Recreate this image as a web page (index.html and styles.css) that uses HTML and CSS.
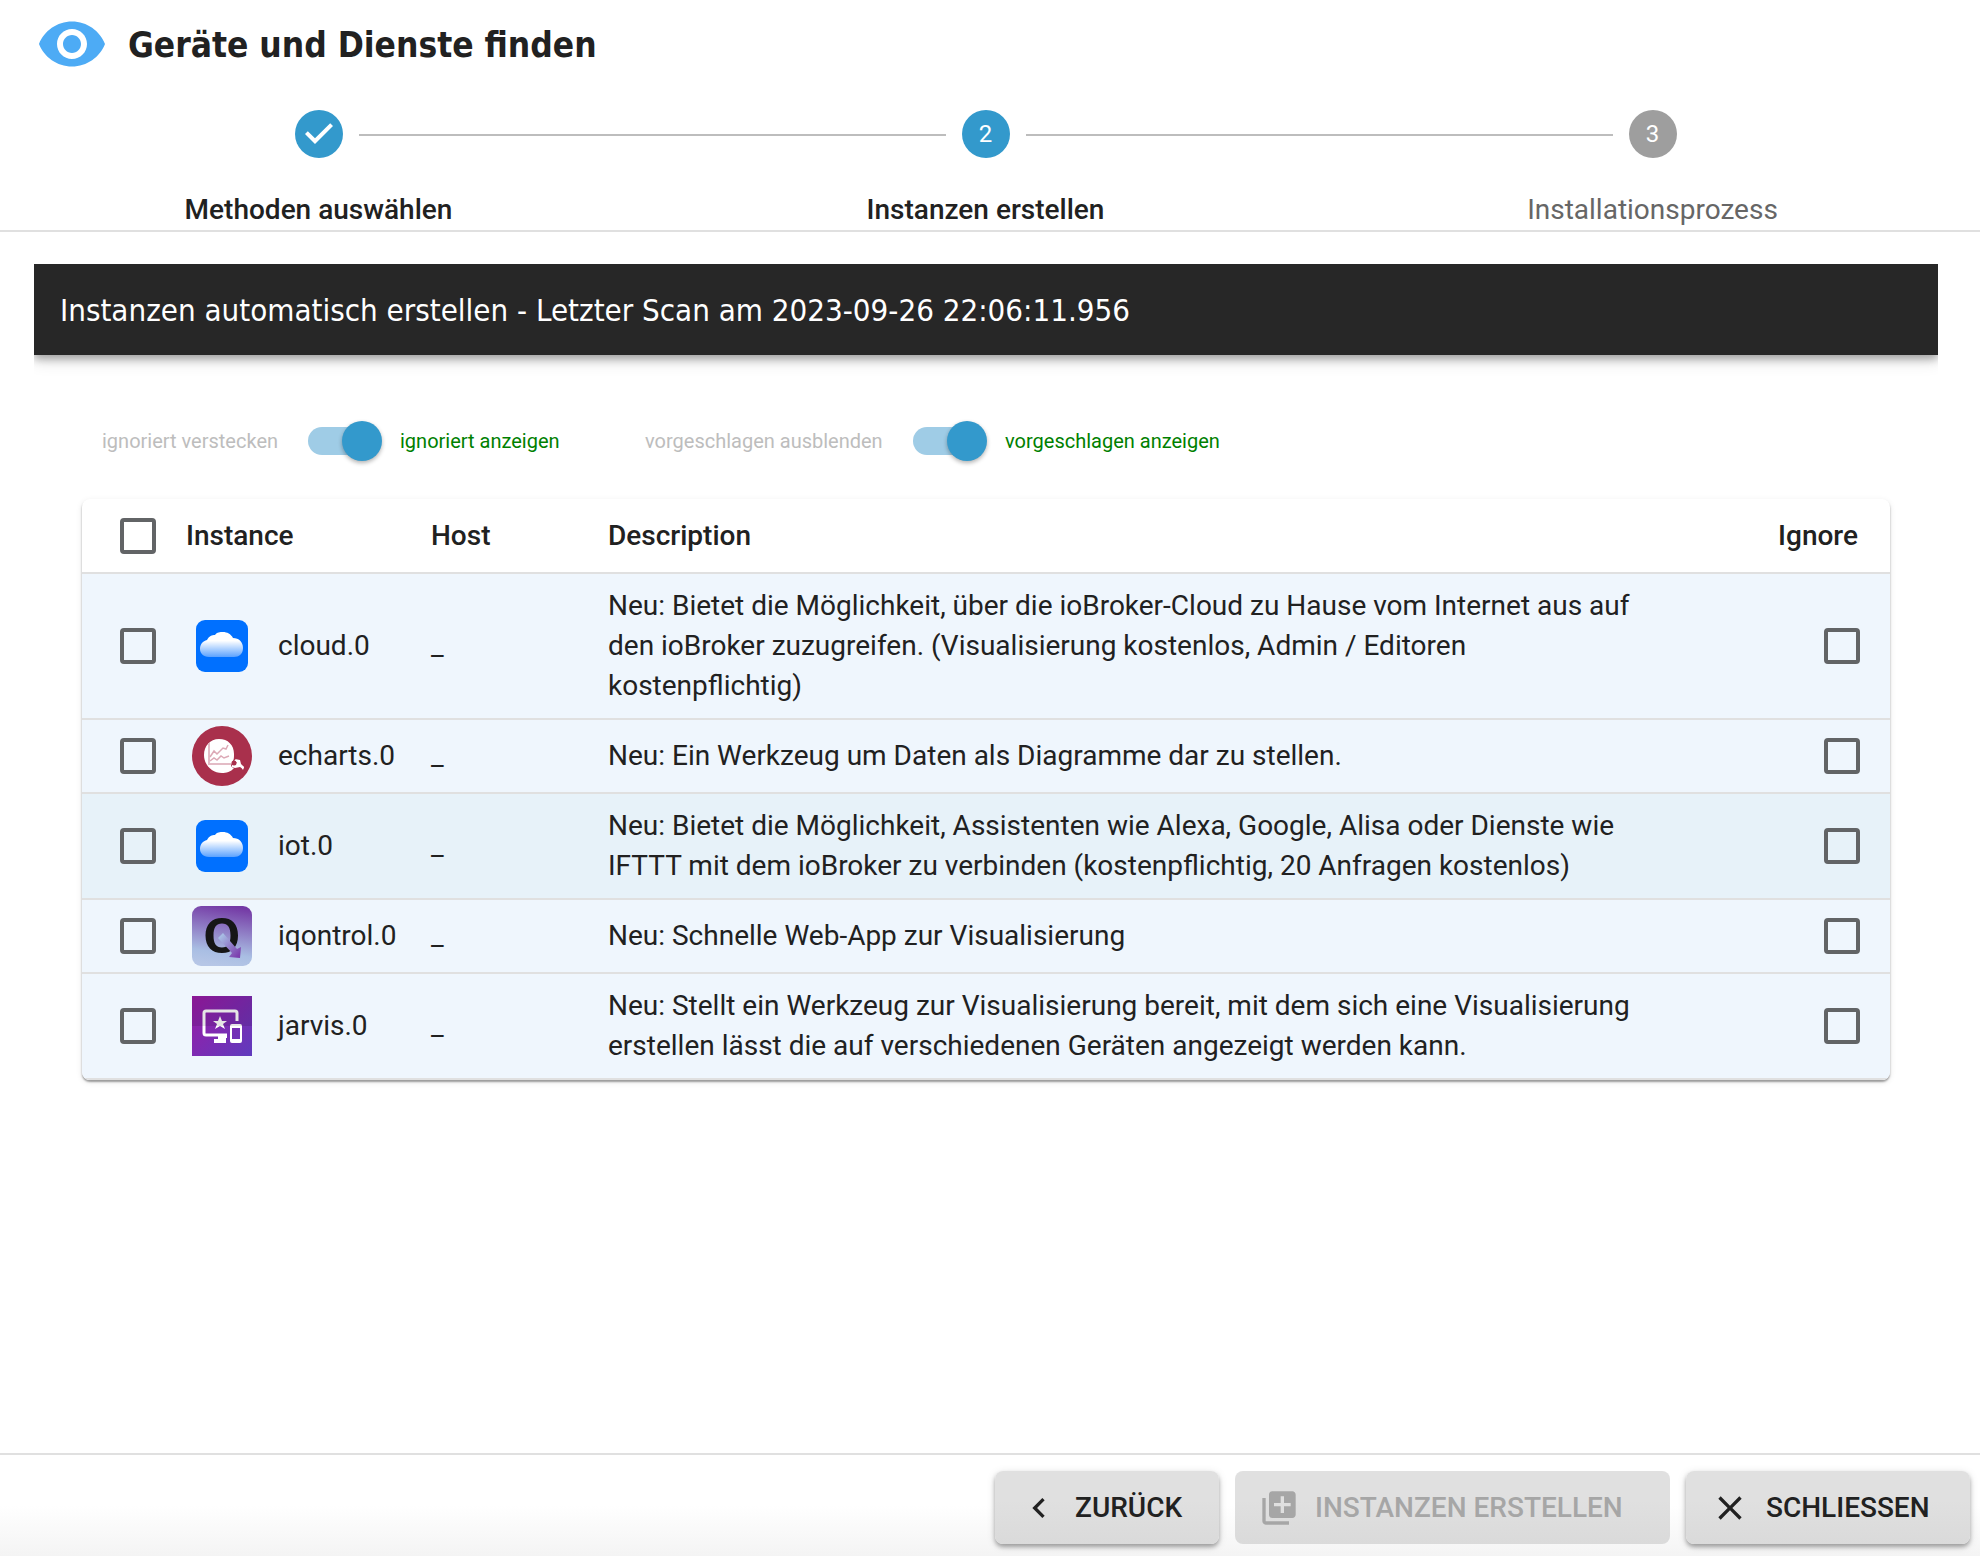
FILE: index.html
```html
<!DOCTYPE html>
<html lang="de">
<head>
<meta charset="utf-8">
<meta name="viewport" content="width=device-width, initial-scale=1">
<title>Geräte und Dienste finden</title>
<link rel="stylesheet" href="styles.css">
</head>
<body>
<div class="dialog">
  <header class="header">
    <div class="title-row">
      <svg class="title-icon" viewBox="0 0 24 24" aria-hidden="true"><path d="M12 4.500C7 4.500 2.730 7.610 1 12c1.730 4.390 6 7.500 11 7.500s9.270-3.110 11-7.500c-1.730-4.390-6-7.500-11-7.500zM12 17c-2.760 0-5-2.240-5-5s2.240-5 5-5 5 2.240 5 5-2.240 5-5 5zm0-8c-1.660 0-3 1.340-3 3s1.340 3 3 3 3-1.340 3-3-1.340-3-3-3z"/></svg>
      <h1 class="title">Geräte und Dienste finden</h1>
    </div>
    <ol class="stepper">
      <li class="step step-done">
        <span class="step-mark">
          <svg class="step-check" viewBox="0 0 24 24" aria-hidden="true"><path d="M10 17l-5-5 1.410-1.410L10 14.170l7.590-7.590L19 8z"/></svg>
        </span>
        <span class="step-label">Methoden auswählen</span>
      </li>
      <li class="step step-active">
        <span class="step-mark">2</span>
        <span class="step-label">Instanzen erstellen</span>
      </li>
      <li class="step">
        <span class="step-mark">3</span>
        <span class="step-label">Installationsprozess</span>
      </li>
    </ol>
  </header>

  <main class="content">
    <h2 class="bar">Instanzen automatisch erstellen - Letzter Scan am 2023-09-26 22:06:11.956</h2>

    <div class="filters">
      <span class="filter-off">ignoriert verstecken</span>
      <input class="switch" type="checkbox" role="switch" id="show-ignored" checked>
      <label class="filter-on" for="show-ignored">ignoriert anzeigen</label>
      <span class="filter-off">vorgeschlagen ausblenden</span>
      <input class="switch" type="checkbox" role="switch" id="show-suggested" checked>
      <label class="filter-on" for="show-suggested">vorgeschlagen anzeigen</label>
    </div>

    <div class="paper">
      <table class="table">
        <colgroup>
          <col class="col-check"><col class="col-instance"><col class="col-host"><col class="col-description"><col class="col-ignore">
        </colgroup>
        <thead>
          <tr>
            <th class="cell-check"><input class="box" type="checkbox" aria-label="Alle auswählen"></th>
            <th scope="col">Instance</th>
            <th scope="col">Host</th>
            <th scope="col">Description</th>
            <th scope="col" class="cell-ignore">Ignore</th>
          </tr>
        </thead>
        <tbody>
          <tr>
            <td class="cell-check"><input class="box" type="checkbox" aria-label="cloud.0 auswählen"></td>
            <td><div class="instance">
              <svg class="logo" viewBox="0 0 60 60" aria-hidden="true">
                <defs><linearGradient id="cloud-a" x1="0" y1="0" x2="0" y2="1"><stop offset=".35" stop-color="#fff"/><stop offset="1" stop-color="#5ba2ff"/></linearGradient></defs>
                <rect x="4" y="4" width="52" height="52" rx="9" fill="#0070ff"/>
                <path d="M17 41C11 41 8 37 8 33c0-5 3-8 7-9 2-4 5-5 8-5 2-3 5-3 8-3 4 0 8 2 10 6 6 0 10 4 10 10 0 6-4 9-9 9z" fill="url(#cloud-a)"/>
              </svg>cloud.0</div></td>
            <td>_</td>
            <td>Neu: Bietet die Möglichkeit, über die ioBroker-Cloud zu Hause vom Internet aus auf den ioBroker zuzugreifen. (Visualisierung kostenlos, Admin / Editoren kostenpflichtig)</td>
            <td class="cell-ignore"><input class="box" type="checkbox" aria-label="cloud.0 ignorieren"></td>
          </tr>
          <tr>
            <td class="cell-check"><input class="box" type="checkbox" aria-label="echarts.0 auswählen"></td>
            <td><div class="instance">
              <svg class="logo" viewBox="0 0 60 60" aria-hidden="true">
                <circle cx="30" cy="30" r="30" fill="#a9304c"/>
                <path d="M27 13c9 0 15 6 15 15 0 3 0 5-1 7l-2 4c0 2 2 3 3 3-3 4-8 5-12 5-10 0-18-8-18-18 0-9 6-16 15-16z" fill="#fff"/>
                <path d="M17 17v21h22" fill="none" stroke="#e3bcc6" stroke-width="2"/>
                <path d="M18 31l4-6 3 3 6-6 3 1 2-4M18 35l4-3 3 2 4-4 3 2 5-2" fill="none" stroke="#dca9b6" stroke-width="1.500"/>
                <path d="M40 38l5-1-3-3 5 0 1 4 4 3-1 2-3-2-5 1-3-1z" fill="#fff"/>
                <circle cx="42" cy="37" r="2.500" fill="#a9304c"/>
                <path d="M43 33l5 1 1 4 3 3-1 3-2-3-4 0 1-3z" fill="#fff"/>
              </svg>echarts.0</div></td>
            <td>_</td>
            <td>Neu: Ein Werkzeug um Daten als Diagramme dar zu stellen.</td>
            <td class="cell-ignore"><input class="box" type="checkbox" aria-label="echarts.0 ignorieren"></td>
          </tr>
          <tr class="row-hover">
            <td class="cell-check"><input class="box" type="checkbox" aria-label="iot.0 auswählen"></td>
            <td><div class="instance">
              <svg class="logo" viewBox="0 0 60 60" aria-hidden="true">
                <rect x="4" y="4" width="52" height="52" rx="9" fill="#0070ff"/>
                <path d="M17 41C11 41 8 37 8 33c0-5 3-8 7-9 2-4 5-5 8-5 2-3 5-3 8-3 4 0 8 2 10 6 6 0 10 4 10 10 0 6-4 9-9 9z" fill="url(#cloud-a)"/>
              </svg>iot.0</div></td>
            <td>_</td>
            <td>Neu: Bietet die Möglichkeit, Assistenten wie Alexa, Google, Alisa oder Dienste wie IFTTT mit dem ioBroker zu verbinden (kostenpflichtig, 20 Anfragen kostenlos)</td>
            <td class="cell-ignore"><input class="box" type="checkbox" aria-label="iot.0 ignorieren"></td>
          </tr>
          <tr>
            <td class="cell-check"><input class="box" type="checkbox" aria-label="iqontrol.0 auswählen"></td>
            <td><div class="instance">
              <svg class="logo" viewBox="0 0 60 60" aria-hidden="true">
                <defs>
                  <linearGradient id="iq-back" x1=".6" y1="0" x2=".45" y2="1"><stop offset="0" stop-color="#7439a5"/><stop offset=".78" stop-color="#a9bee3"/><stop offset="1" stop-color="#b6c6e6"/></linearGradient>
                  <linearGradient id="iq-arrow" x1="0" y1="0" x2="1" y2="1"><stop offset=".1" stop-color="#a9c2e6"/><stop offset=".9" stop-color="#7c3fae"/></linearGradient>
                </defs>
                <rect width="60" height="60" rx="9" fill="url(#iq-back)"/>
                <path d="M30 12c10 0 16 6 16 17.500S40 47 30 47s-16.500-6-16.500-17.500S20 12 30 12zm0 5.500c-6 0-8.500 4-8.500 12s2.500 12 8.500 12 8.500-4 8.500-12-2.500-12-8.500-12z" fill="#161616" fill-rule="evenodd"/>
                <path d="M31 27l14 16 4-2-1 11-11-1 3-4-14-15z" fill="url(#iq-arrow)"/>
              </svg>iqontrol.0</div></td>
            <td>_</td>
            <td>Neu: Schnelle Web-App zur Visualisierung</td>
            <td class="cell-ignore"><input class="box" type="checkbox" aria-label="iqontrol.0 ignorieren"></td>
          </tr>
          <tr>
            <td class="cell-check"><input class="box" type="checkbox" aria-label="jarvis.0 auswählen"></td>
            <td><div class="instance">
              <svg class="logo" viewBox="0 0 60 60" aria-hidden="true">
                <defs><linearGradient id="jarvis-back" x1="0" y1="0" x2="1" y2="1"><stop offset="0" stop-color="#9c1aa6"/><stop offset="1" stop-color="#5f3bbd"/></linearGradient></defs>
                <rect width="60" height="60" fill="url(#jarvis-back)"/>
                <path d="M45 25v-8q0-2-2-2H14q-2 0-2 2v20q0 2 2 2h21" fill="none" stroke="#fff" stroke-width="3"/>
                <path d="M26 38h9v4h-1v5H22v-4h4z" fill="#fff"/>
                <path d="M28 20l2 5h5l-4 3 2 5-5-3-5 3 2-5-4-3h5z" fill="#fff"/>
                <path d="M40 28h8q2 0 2 2v15q0 2-2 2h-8q-2 0-2-2V30q0-2 2-2zm0 4v11h8V32z" fill="#fff" fill-rule="evenodd"/>
                <rect width="60" height="30" fill="#000" opacity=".1"/>
              </svg>jarvis.0</div></td>
            <td>_</td>
            <td>Neu: Stellt ein Werkzeug zur Visualisierung bereit, mit dem sich eine Visualisierung erstellen lässt die auf verschiedenen Geräten angezeigt werden kann.</td>
            <td class="cell-ignore"><input class="box" type="checkbox" aria-label="jarvis.0 ignorieren"></td>
          </tr>
        </tbody>
      </table>
    </div>
  </main>

  <footer class="footer">
    <button class="button button-back" type="button">
      <svg class="button-icon" viewBox="0 0 24 24" aria-hidden="true"><path d="M15.410 7.410L14 6l-6 6 6 6 1.410-1.410L10.830 12z"/></svg>
      ZURÜCK
    </button>
    <button class="button button-create" type="button" disabled>
      <svg class="button-icon" viewBox="0 0 24 24" aria-hidden="true"><path d="M4 6H2v14c0 1.100.9 2 2 2h14v-2H4V6zm16-4H8c-1.100 0-2 .9-2 2v12c0 1.100.9 2 2 2h12c1.100 0 2-.9 2-2V4c0-1.100-.9-2-2-2zm-1 9h-4v4h-2v-4H9V9h4V5h2v4h4v2z"/></svg>
      INSTANZEN ERSTELLEN
    </button>
    <button class="button button-close" type="button">
      <svg class="button-icon" viewBox="0 0 24 24" aria-hidden="true"><path d="M19 6.410L17.590 5 12 10.590 6.410 5 5 6.410 10.590 12 5 17.590 6.410 19 12 13.410 17.590 19 19 17.590 13.410 12z"/></svg>
      SCHLIESSEN
    </button>
  </footer>
</div>
</body>
</html>
```
FILE: styles.css
```css
*, *::before, *::after { box-sizing: border-box; }

body {
  margin: 0;
  font-family: Roboto, "Liberation Sans", sans-serif;
  font-size: 28px;
  line-height: 40px;
  color: #212121;
  background: #fff;
}

.dialog {
  display: flex;
  flex-direction: column;
  min-height: 100vh;
}

/* Header and stepper */
.header {
  overflow: hidden;
  border-bottom: 2px solid #e0e0e0;
}

.title-row {
  display: flex;
  align-items: center;
  gap: 20px;
  padding: 8px 36px 0;
}

.title-icon {
  width: 72px;
  height: 72px;
  fill: #4dabf5;
}

.title {
  margin: 0;
  padding-top: 2px;
  font-family: "DejaVu Sans Condensed", "DejaVu Sans", sans-serif;
  font-size: 35px;
  font-weight: 700;
  line-height: 48px;
}

.stepper {
  display: grid;
  grid-template-columns: repeat(3, 1fr);
  margin: 30px -6px 0 -15px;
  padding: 0;
  list-style: none;
}

.step {
  position: relative;
  display: flex;
  flex-direction: column;
  align-items: center;
  gap: 32px;
  color: #666;
}

.step + .step::before {
  content: "";
  position: absolute;
  top: 24px;
  left: calc(-50% + 40px);
  right: calc(50% + 40px);
  height: 2px;
  background: #bdbdbd;
}

.step-mark {
  display: flex;
  align-items: center;
  justify-content: center;
  width: 48px;
  height: 48px;
  border-radius: 50%;
  background: #9e9e9e;
  color: #fff;
  font-size: 24px;
}

.step-done .step-mark,
.step-active .step-mark { background: #3399cc; }

.step-check {
  width: 48px;
  height: 48px;
  fill: #fff;
}

.step-label { line-height: 40px; }

.step-done .step-label,
.step-active .step-label {
  color: #212121;
  font-weight: 500;
}

/* Content */
.content {
  flex: 1;
  overflow: hidden;
  margin: 32px 42px 0 34px;
}

.bar {
  margin: 0;
  padding: 23px 26px 21px;
  background: #272727;
  color: #fff;
  box-shadow: 0 4px 8px rgba(0, 0, 0, .3), 0 6px 16px rgba(0, 0, 0, .12);
  font-family: "DejaVu Sans Condensed", "DejaVu Sans", sans-serif;
  font-size: 31px;
  font-weight: 400;
  line-height: 47px;
}

.filters {
  display: grid;
  grid-template-columns: 182px 116px 245px 244px 116px auto;
  align-items: center;
  padding: 66px 68px 0;
  font-size: 20px;
}

.filter-off { color: #bdbdbd; }
.filter-on { color: #008000; }

.switch {
  position: relative;
  appearance: none;
  width: 68px;
  height: 28px;
  margin: 0 24px;
  border-radius: 14px;
  background: #9fcce6;
}

.switch::before {
  content: "";
  position: absolute;
  top: -6px;
  left: -6px;
  width: 40px;
  height: 40px;
  border-radius: 50%;
  background: #fff;
  box-shadow: 0 2px 4px rgba(0, 0, 0, .3);
}

.switch:checked::before {
  left: 34px;
  background: #3399cc;
}

/* Instance table */
.paper {
  overflow: hidden;
  margin: 38px 48px 8px;
  border-radius: 8px;
  box-shadow: 0 2px 2px rgba(0, 0, 0, .35), 0 2px 6px rgba(0, 0, 0, .1);
}

.table {
  width: 100%;
  border-collapse: separate;
  border-spacing: 0;
  table-layout: fixed;
}

.col-check { width: 104px; }
.col-instance { width: 245px; }
.col-host { width: 177px; }
.col-ignore { width: 206px; }

.table th,
.table td {
  padding: 0;
  border-bottom: 2px solid #e0e0e0;
  text-align: left;
  vertical-align: middle;
}

.table th {
  height: 75px;
  font-weight: 500;
}

.table td {
  height: 74px;
  padding: 12px 0;
}

.table tbody tr { background: #eff6fd; }
.table tbody .row-hover { background: #e7f2f9; }

.table td:nth-child(2) { padding: 0 0 0 6px; }
.table td:nth-child(4) { padding-right: 18px; }

.table .cell-check { padding: 0 0 0 38px; }
.table .cell-ignore { padding: 0 30px 0 0; }
.table th.cell-ignore {
  padding-right: 32px;
  text-align: right;
}
.cell-ignore .box { margin-left: auto; }

.instance {
  display: flex;
  align-items: center;
  gap: 26px;
}

.logo {
  flex: none;
  width: 60px;
  height: 60px;
}

.box {
  display: block;
  appearance: none;
  width: 36px;
  height: 36px;
  margin: 0;
  border: 4px solid #626466;
  border-radius: 4px;
}

/* Footer */
.footer {
  display: flex;
  justify-content: flex-end;
  gap: 16px;
  padding: 16px 10px 12px;
  border-top: 2px solid #e0e0e0;
  background: linear-gradient(#fff 50%, #f4f4f4);
}

.button {
  display: flex;
  align-items: center;
  gap: 16px;
  padding: 12px 24px;
  border: 0;
  border-radius: 8px;
  background: linear-gradient(#e0e0e0 40%, #dadada);
  box-shadow: 0 3px 4px rgba(0, 0, 0, .3), 0 2px 10px rgba(0, 0, 0, .12);
  color: #212121;
  font: 500 28px/49px Roboto, "Liberation Sans", sans-serif;
}

.button-back { min-width: 224px; }
.button-create { min-width: 435px; }
.button-close { min-width: 284px; }

.button:disabled {
  box-shadow: none;
  color: #a6a6a6;
}

.button-icon {
  width: 40px;
  height: 40px;
  fill: currentColor;
}
```
